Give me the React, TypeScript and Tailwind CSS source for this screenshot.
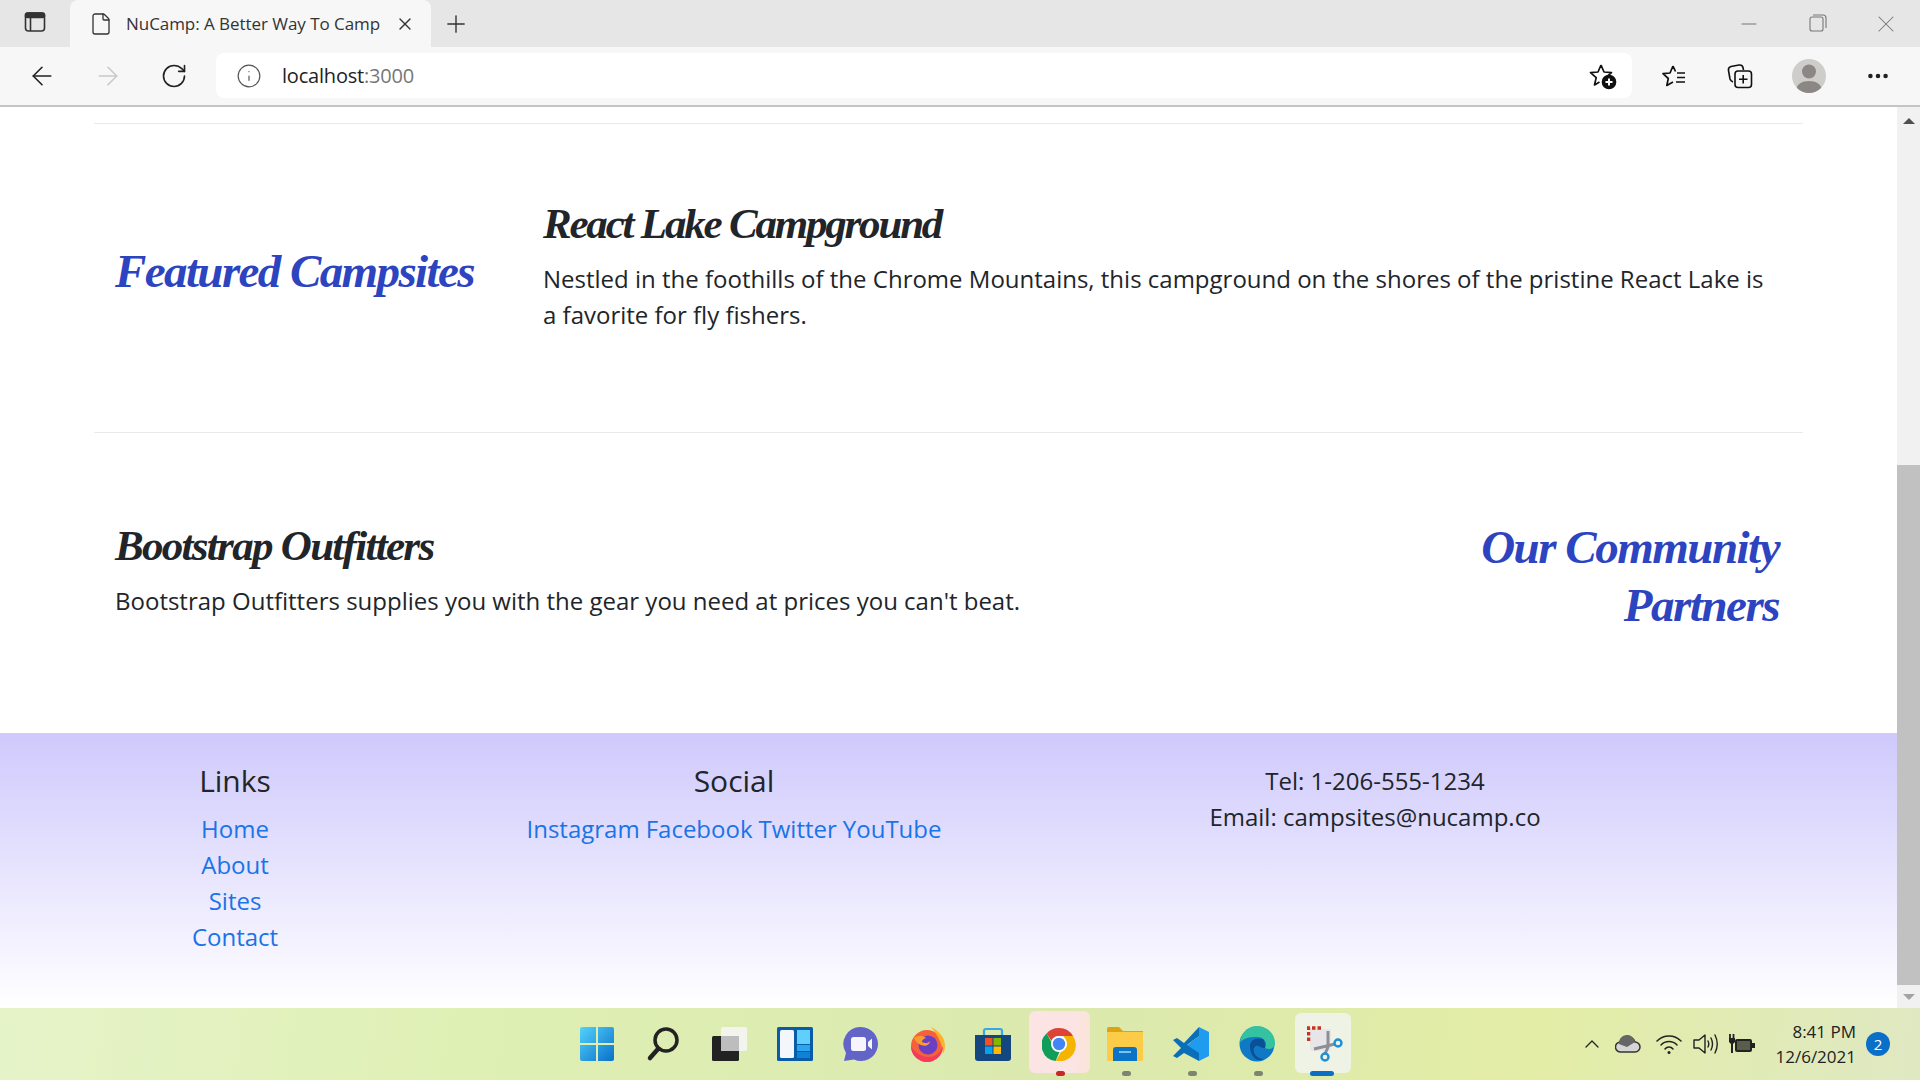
import { ArrowLeft, ArrowRight, ChevronUp, File, Info, Minus, MoreHorizontal, Plus, RotateCw, X } from "lucide-react";

const script = "font-['Liberation_Serif',serif] font-bold italic";

function TabsIcon() {
  return (
    <svg width="22" height="22" viewBox="0 0 22 22" fill="none" stroke="#333" strokeWidth="1.6">
      <rect x="1.5" y="2" width="19" height="18" rx="3" />
      <rect x="1.5" y="2" width="19" height="4.5" rx="2" fill="#333" />
      <path d="M6.5 6v14" />
    </svg>
  );
}

function StarPlus() {
  return (
    <svg width="28" height="28" viewBox="0 0 28 28" fill="none" stroke="#111" strokeWidth="1.7" strokeLinejoin="round">
      <path d="M12 3l3 7 7.500 .6-5.500 4.800M12 3L9 10l-7.500 .6 5.700 5-1.700 7.400 5-3" />
      <circle cx="20" cy="20" r="6.500" fill="#111" />
      <path d="M20 16.500v7M16.500 20h7" stroke="#fff" strokeWidth="2" />
    </svg>
  );
}

function StarList() {
  return (
    <svg width="26" height="26" viewBox="0 0 26 26" fill="none" stroke="#111" strokeWidth="1.7" strokeLinejoin="round">
      <path d="M12 3l-3 7-7 .7 5.300 4.800-1.500 7 6.200-3.500M12 3l2.500 5.500M16 10h8M16 14.500h8M15 19h9" />
    </svg>
  );
}

function Collections() {
  return (
    <svg width="26" height="26" viewBox="0 0 26 26" fill="none" stroke="#111" strokeWidth="1.6">
      <path d="M6 19c-1.500-.5-2.500-1.500-3-3L1.500 7.500C1.200 5.500 2 4 4 3.500l8-1.500c2-.3 3.500.5 4 2.500l.5 2.500" />
      <rect x="8" y="8" width="16.500" height="16.500" rx="3" />
      <path d="M16.200 12v8.500M12 16.200h8.500" />
    </svg>
  );
}

function Avatar() {
  return (
    <div className="relative flex h-[34px] w-[34px] items-center justify-center overflow-hidden rounded-full bg-[#cfcdca]">
      <svg width="34" height="34" viewBox="0 0 34 34" fill="#8b8784">
        <circle cx="17" cy="12.500" r="7" />
        <path d="M4 31c1-6 6-9 13-9s12 3 13 9c-3 2.500-8 3-13 3s-10-.5-13-3z" />
      </svg>
    </div>
  );
}

function ChromeIcon() {
  return (
    <svg width="34" height="34" viewBox="0 0 34 34">
      <path d="M17 1a16 16 0 0 1 14 8H17a8 8 0 0 0-7.500 5L4.500 6.500A16 16 0 0 1 17 1z" fill="#db4437" />
      <path d="M4.500 6.500l7.200 12.500a6 6 0 0 0 6.500 4l-4.500 11A16 16 0 0 1 4.500 6.500z" fill="#0f9d58" />
      <path d="M31 9a16 16 0 0 1-17 24.700l7.300-12.700a8 8 0 0 0 0-12z" fill="#f4b400" />
      <circle cx="17" cy="17" r="8" fill="#fff" />
      <circle cx="17" cy="17" r="6.200" fill="#4285f4" />
    </svg>
  );
}

// taskbar icons, left to right
const taskbarIcons = [
  <svg key="win" width="36" height="36" viewBox="0 0 36 36">
    <defs>
      <linearGradient id="w1" x1="0" y1="0" x2="1" y2="1">
        <stop offset="0" stopColor="#52d3fb" />
        <stop offset="1" stopColor="#0a70c8" />
      </linearGradient>
    </defs>
    <path d="M1 3a2 2 0 0 1 2-2h14v16H1zM19 1h14a2 2 0 0 1 2 2v14H19zM1 19h16v16H3a2 2 0 0 1-2-2zM19 19h16v14a2 2 0 0 1-2 2H19z" fill="url(#w1)" />
  </svg>,
  <svg key="search" width="36" height="36" viewBox="0 0 36 36" fill="none" stroke="#222" strokeLinecap="round">
    <circle cx="21" cy="14" r="11" strokeWidth="3.500" />
    <path d="M13 23l-8 9" strokeWidth="4.500" />
  </svg>,
  <svg key="view" width="36" height="36" viewBox="0 0 36 36">
    <rect x="1" y="10" width="27" height="25" rx="1.500" fill="#222" />
    <rect x="10" y="1" width="26" height="24" rx="1.500" fill="#f4f4f4" fillOpacity="0.9" />
    <rect x="10" y="10" width="18" height="15" fill="#bdbdbd" />
  </svg>,
  <svg key="widgets" width="36" height="36" viewBox="0 0 36 36">
    <rect x="0" y="1" width="36" height="34" rx="1.500" fill="#0a5ca8" />
    <rect x="3" y="4" width="14" height="28" rx="1.500" fill="#f3f6fa" />
    <rect x="20" y="4" width="13" height="14" fill="#5fd0fb" />
    <rect x="20" y="19" width="13" height="6" fill="#2ba5ee" />
    <rect x="20" y="26" width="13" height="6" fill="#0f82d8" />
  </svg>,
  <svg key="chat" width="36" height="36" viewBox="0 0 36 36">
    <path d="M18 1a17 17 0 1 1-7 32.500L1 35l2-8A17 17 0 0 1 18 1z" fill="#6364c8" />
    <rect x="8" y="11" width="15" height="14" rx="2.500" fill="#f5f5fb" />
    <path d="M25 16l4-3.500v11L25 20z" fill="#f5f5fb" />
  </svg>,
  <svg key="firefox" width="36" height="36" viewBox="0 0 36 36">
    <circle cx="18" cy="20" r="16" fill="#f5623a" />
    <path d="M22 1c8 4 14 10 14 19a18 18 0 0 1-2 8C33 16 28 8 22 1z" fill="#fbb32c" />
    <path d="M2 20a16 16 0 0 0 32 0c-3 8-9 11-15 11S6 27 2 20z" fill="#f63a5c" />
    <circle cx="19" cy="19" r="9.500" fill="#6a3fc4" />
    <path d="M5 12c4-3 9-3 12 0-3 1-4 2-4 4 3 2 7 1 8-1 0 4-5 6-9 4-3-1-6-4-7-7z" fill="#fb9a2d" />
  </svg>,
  <svg key="store" width="36" height="36" viewBox="0 0 36 36">
    <path d="M9 9V5a2 2 0 0 1 2-2h14a2 2 0 0 1 2 2v4" fill="none" stroke="#35a8ea" strokeWidth="2.200" />
    <path d="M0 9h36v23a3 3 0 0 1-3 3H3a3 3 0 0 1-3-3z" fill="#14467f" />
    <rect x="10" y="12" width="7.500" height="7.500" fill="#f25022" />
    <rect x="18.500" y="12" width="7.500" height="7.500" fill="#7fba00" />
    <rect x="10" y="20.500" width="7.500" height="7.500" fill="#00a4ef" />
    <rect x="18.500" y="20.500" width="7.500" height="7.500" fill="#ffb900" />
  </svg>,
  <ChromeIcon key="chrome" />,
  <svg key="folder" width="36" height="36" viewBox="0 0 36 36">
    <path d="M0 3a2 2 0 0 1 2-2h10l4 4h20v6H0z" fill="#dca412" />
    <rect x="0" y="6" width="36" height="29" rx="1" fill="#fccc48" />
    <path d="M6 35v-11a3 3 0 0 1 3-3h18a3 3 0 0 1 3 3v11z" fill="#0c74c6" />
    <rect x="12" y="25" width="12" height="2" fill="#7cc4f0" />
  </svg>,
  <svg key="code" width="36" height="36" viewBox="0 0 36 36">
    <path d="M26 1l10 5v24l-10 5-14-14 14-11z" fill="#1f9cf0" />
    <path d="M26 1L11 17l-7-5-4 2 8 8-8 8 4 2 7-5 15 8v-8L14 19l12-9z" fill="#0a6fb8" />
  </svg>,
  <svg key="edge" width="36" height="36" viewBox="0 0 36 36">
    <circle cx="18" cy="18" r="17.500" fill="#0f79c6" />
    <path d="M1 17C2 6 10 0 18 0c10 0 18 8 18 17 0 6-6 7-10 5 3-5-1-11-8-11C10 11 4 12 1 17z" fill="#35c2a0" />
    <path d="M11 20c0-6 6-9 13-7 2 2 2 5 2 9-6 0-8-5-11 0-2 5 3 11 10 11-9 4-14-5-14-13z" fill="#0b4f95" />
  </svg>,
  <svg key="snip" width="36" height="36" viewBox="0 0 36 36" fill="none">
    <rect x="3" y="3" width="21" height="22" rx="2" fill="#e6e6e8" />
    <path d="M1.500 15V2h13" stroke="#c8321f" strokeWidth="3.500" strokeDasharray="3.500 2" />
    <path d="M7 23l21-5M21 5v16l-3 7" stroke="#8d8f94" strokeWidth="3" />
    <circle cx="31" cy="17" r="3.500" stroke="#1b8fd8" strokeWidth="2.400" />
    <circle cx="18" cy="31" r="3.500" stroke="#1b8fd8" strokeWidth="2.400" />
  </svg>,
];

function Taskbar() {
  return (
    <footer className="grid h-[72px] shrink-0 grid-cols-[1fr_auto_1fr] items-center bg-[linear-gradient(100deg,#e6f3c9_0%,#dff0b4_25%,#dbe9ae_55%,#e3eda6_80%,#dfe8c2_100%)]">
      <div />
      <div className="flex items-center">
        {taskbarIcons.map((icon, i) => (
          <div key={i} className={`relative flex h-[72px] w-[66px] items-center justify-center ${i === 11 ? "pl-[4px]" : ""}`}>
            {i === 7 && (
              <>
                <div className="absolute left-[5px] top-[3px] h-[62px] w-[59px] rounded-md bg-[#fbe4dc]" />
                <div className="absolute left-[3px] top-[3px] h-[62px] w-[50px] rounded-md bg-[#fce4e4]" />
              </>
            )}
            {i === 11 && <div className="absolute left-[5px] top-[5px] h-[60px] w-[56px] rounded-md bg-[#eff3e6]" />}
            <div className="relative">{icon}</div>
            {i >= 7 && i <= 10 && (
              <div className={`absolute bottom-[4px] left-[30px] h-[5px] w-[9px] rounded-full ${i === 7 ? "bg-[#c62828]" : "bg-[#7d8570]"}`} />
            )}
            {i === 11 && <div className="absolute bottom-[4px] left-[20px] h-[5px] w-[24px] rounded-full bg-[#0b6fc4]" />}
          </div>
        ))}
      </div>
      <div className="flex items-center justify-end pr-[30px] font-['Open_Sans',sans-serif] text-[#222]">
        <ChevronUp size={24} strokeWidth={1.3} />
        <svg className="ml-[11px]" width="26" height="18" viewBox="0 0 26 18">
          <path d="M6 17a5 5 0 0 1-1-10 8 8 0 0 1 15 0 5 5 0 0 1 0 10z" fill="#d5d5d5" stroke="#333" strokeWidth="1.500" />
          <path d="M4 9a8 8 0 0 1 16-2l-8 5z" fill="#666" />
        </svg>
        <svg className="ml-[15px]" width="26" height="22" viewBox="0 0 26 22" fill="none" stroke="#222" strokeWidth="1.500" strokeLinecap="round">
          <path d="M1 8a17 17 0 0 1 24 0M5 12a11 11 0 0 1 16 0M9 16a5 5 0 0 1 8 0" />
          <circle cx="13" cy="19.500" r="1.500" fill="#222" stroke="none" />
        </svg>
        <svg className="ml-[11px]" width="26" height="24" viewBox="0 0 26 24" fill="none" stroke="#222" strokeWidth="1.400" strokeLinecap="round" strokeLinejoin="round">
          <path d="M1 8h5l6-5v18l-6-5H1zM15 9c1 2 1 4 0 6M18 6c2 4 2 8 0 12M22 3c3 6 3 12 0 18" />
        </svg>
        <svg className="ml-[10px]" width="26" height="22" viewBox="0 0 26 22" fill="#222">
          <path d="M1 1v4M4.500 1v4" stroke="#222" strokeWidth="1.800" />
          <path d="M0 5h6v4l-2 2v9H2v-9L0 9z" />
          <rect x="6" y="6" width="17" height="13" rx="2" />
          <rect x="8" y="8" width="13" height="9" fill="#dfe8a8" fillOpacity="0.3" />
          <rect x="23" y="10" width="3" height="5" />
        </svg>
        <div className="ml-[20px] flex flex-col items-end text-[17px] leading-[25px]">
          <span>8:41 PM</span>
          <span>12/6/2021</span>
        </div>
        <div className="ml-[10px] flex h-6 w-6 items-center justify-center rounded-full bg-[#0a6fc9] text-[15px] text-white">2</div>
      </div>
    </footer>
  );
}

function Browser() {
  return (
    <header className="shrink-0 font-['Open_Sans',sans-serif]">
      <div className="flex h-[47px] items-end bg-[#e6e6e6]">
        <div className="flex h-[47px] w-[70px] items-center justify-center pb-[3px]">
          <TabsIcon />
        </div>
        <div className="flex h-[47px] w-[361px] items-center rounded-t-lg bg-[#f7f7f7] pl-[19px] pr-[16px]">
          <File size={24} strokeWidth={1.3} className="text-[#333]" />
          <span className="ml-[13px] flex-1 truncate text-[17px] tracking-[-0.05px] text-[#333]">NuCamp: A Better Way To Camp</span>
          <X size={20} strokeWidth={1.6} className="text-[#333]" />
        </div>
        <div className="flex h-[47px] w-[50px] items-center justify-center">
          <Plus size={28} strokeWidth={1.2} className="text-[#333]" />
        </div>
        <div className="flex-1" />
        <div className="flex h-[47px] items-center gap-[42px] pr-[20px] text-[#777]">
          <Minus size={24} strokeWidth={1} className="w-[26px]" />
          <svg width="26" height="22" viewBox="0 0 26 22" fill="none" stroke="#777" strokeWidth="1.100">
            <rect x="6" y="4" width="13" height="14" rx="2" />
            <path d="M9 2h10a3 3 0 0 1 3 3v10" />
          </svg>
          <X size={28} strokeWidth={0.9} />
        </div>
      </div>
      <div className="flex h-[60px] items-center border-b-2 border-[#c4c4c4] bg-[#f7f7f7] pb-[1px]">
        <div className="flex w-[216px] items-center pl-[27px] text-[#222]">
          <ArrowLeft size={30} strokeWidth={1.3} />
          <ArrowRight size={30} strokeWidth={1.3} className="ml-[36px] text-[#c9c9c9]" />
          <RotateCw size={28} strokeWidth={1.4} className="ml-[37px]" />
        </div>
        <div className="flex h-[45px] w-[1416px] items-center rounded-lg bg-white pl-[20px] pr-[15px]">
          <Info size={26} strokeWidth={1.1} className="text-[#555]" />
          <span className="ml-[20px] flex-1 text-[20px] tracking-[-0.2px] text-[#222]">
            localhost<span className="text-[#777]">:3000</span>
          </span>
          <StarPlus />
        </div>
        <div className="flex flex-1 items-center pl-[29px]">
          <StarList />
          <div className="ml-[40px]">
            <Collections />
          </div>
          <div className="ml-[39px]">
            <Avatar />
          </div>
          <MoreHorizontal size={26} strokeWidth={2.2} className="ml-[39px] text-[#222]" />
        </div>
      </div>
    </header>
  );
}

function Scrollbar() {
  return (
    <div className="flex w-[23px] shrink-0 flex-col items-center bg-[#f1f1f1]">
      <div className="mt-[11px] h-0 w-0 border-x-[6px] border-b-[6px] border-x-transparent border-b-[#505050]" />
      <div className="mt-[341px] h-[520px] w-full bg-[#c1c1c1]" />
      <div className="mt-[9px] h-0 w-0 border-x-[6px] border-t-[6px] border-x-transparent border-t-[#a3a3a3]" />
    </div>
  );
}

function Page() {
  return (
    <div className="flex h-full min-w-0 flex-1 flex-col overflow-hidden bg-white font-['Open_Sans',sans-serif] text-[24px] leading-[36px] text-[#212529]">
      <div className="mt-[16px] flex-1 px-[94px]">
        <div className="flex h-[309px] items-center border-t border-[#e9e9e9]">
          <div className="w-[428px] shrink-0 px-[21px] pb-[14px]">
            <h2 className={`${script} text-[47px] leading-[58px] tracking-[-1.6px] text-[#2d44c0]`}>Featured Campsites</h2>
          </div>
          <div className="flex-1 px-[21px]">
            <h3 className={`${script} mb-[13px] text-[43px] leading-[48px] tracking-[-2.2px]`}>React Lake Campground</h3>
            <p className="mb-[24px]">
              Nestled in the foothills of the Chrome Mountains, this campground on the shores of the pristine React Lake is a favorite for fly fishers.
            </p>
          </div>
        </div>
        <div className="flex h-[300px] items-center border-t border-[#e9e9e9]">
          <div className="flex-1 px-[21px]">
            <h3 className={`${script} mb-[13px] text-[43px] leading-[48px] tracking-[-1.7px]`}>Bootstrap Outfitters</h3>
            <p className="mb-[24px]">Bootstrap Outfitters supplies you with the gear you need at prices you can't beat.</p>
          </div>
          <div className="w-[427px] shrink-0 px-[24px] pb-[14px] text-right">
            <h2 className={`${script} text-[47px] leading-[58px] tracking-[-1.5px] text-[#2d44c0]`}>Our Community Partners</h2>
          </div>
        </div>
      </div>
      <div className="grid h-[275px] shrink-0 grid-cols-[470px_528px_1fr] bg-[linear-gradient(#cfc9fc,#ffffff)] pt-[30px] text-center">
        <div>
          <h5 className="mb-[12px] text-[30px] leading-[36px]">Links</h5>
          <ul className="text-[#1a73e8]">
            <li>Home</li>
            <li>About</li>
            <li>Sites</li>
            <li>Contact</li>
          </ul>
        </div>
        <div>
          <h5 className="mb-[12px] text-[30px] leading-[36px]">Social</h5>
          <div className="flex justify-center gap-[6px] text-[#1a73e8]">
            <span>Instagram</span>
            <span>Facebook</span>
            <span>Twitter</span>
            <span>YouTube</span>
          </div>
        </div>
        <div className="pr-[145px]">
          <p>Tel: 1-206-555-1234</p>
          <p>Email: campsites@nucamp.co</p>
        </div>
      </div>
    </div>
  );
}

export default function App() {
  return (
    <div className="flex h-screen w-full flex-col overflow-hidden">
      <Browser />
      <div className="flex min-h-0 flex-1">
        <Page />
        <Scrollbar />
      </div>
      <Taskbar />
    </div>
  );
}
